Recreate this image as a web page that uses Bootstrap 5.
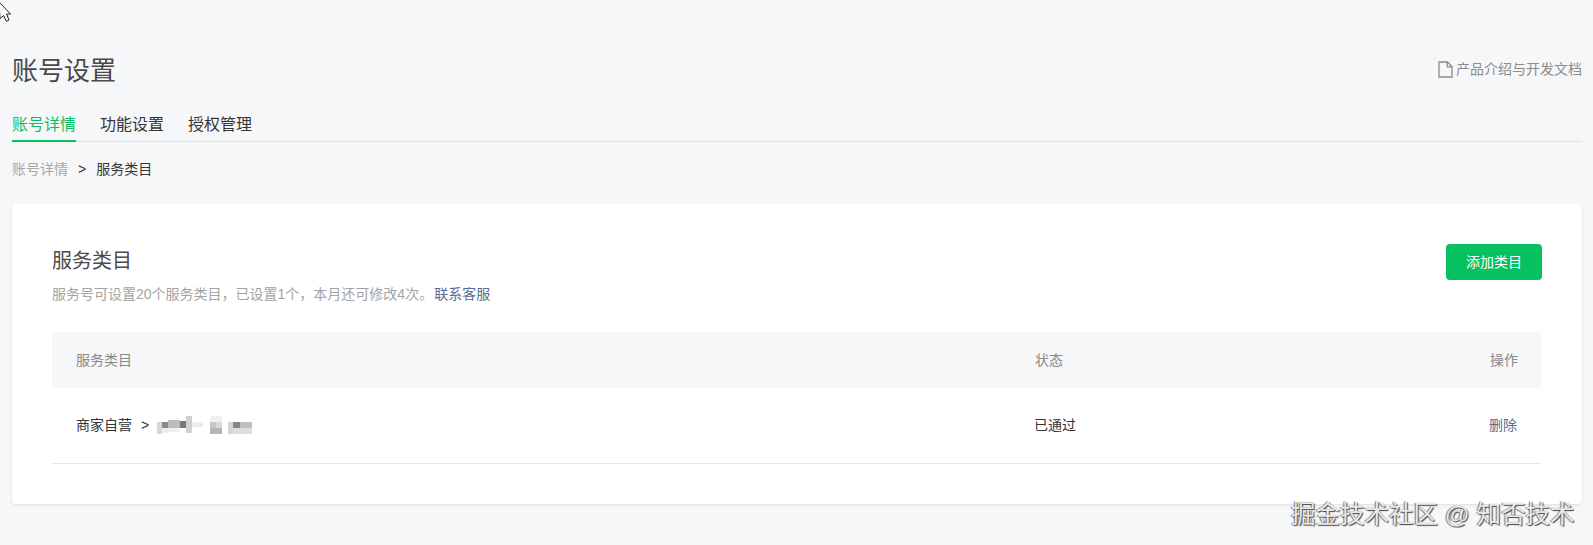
<!DOCTYPE html>
<html lang="zh-CN">
<head>
<meta charset="UTF-8">
<meta name="viewport" content="width=device-width, initial-scale=1">
<title>账号设置</title>
<link href="https://cdn.jsdelivr.net/npm/bootstrap@5.3.3/dist/css/bootstrap.min.css" rel="stylesheet">
<style>
html, body { height: 100%; }
body { background: #f6f7f9; color: #353535; font-family: "Liberation Sans", "Noto Sans CJK SC", sans-serif; overflow: hidden; position: relative; }
.page-wrap { padding: 51px 11px 0 12px; }
.page-title { font-size: 26px; line-height: 40px; font-weight: 400; color: #4a4a4a; margin: 0; }
.doc-link { font-size: 14px; color: #8c8c8c; text-decoration: none; margin-top: -4px; }
.doc-icon { margin-right: 3px; }
.tab-bar { margin-top: 18px; border-bottom: 1px solid #e0e2e5; gap: 24px; height: 33px; }
.tab-item { font-size: 16px; line-height: 24px; height: 33px; padding-top: 4px; color: #353535; text-decoration: none; }
.tab-item.on { color: #07c160; border-bottom: 2px solid #07c160; }
.crumbs { font-size: 14px; line-height: 20px; margin-top: 17px; color: #353535; }
.crumbs .prev { color: #a8a8a8; }
.crumbs .sep { margin: 0 10px; }
.panel { background: #fff; border-radius: 4px; box-shadow: 0 1px 3px rgba(0,0,0,.1); margin-top: 25px; padding: 40px 40px 40px; }
.panel-title { font-size: 20px; line-height: 32px; font-weight: 400; color: #4a4a4a; margin: 1px 0 0; }
.panel-tip { font-size: 14px; line-height: 20px; color: #a3a3a3; margin: 7px 0 0; }
.blue-link { color: #576b95; text-decoration: none; }
.panel-tip .blue-link { margin-left: 1px; }
.btn-add { background: #07c160; color: #fff; width: 96px; height: 36px; font-size: 14px; line-height: 20px; border: 0; border-radius: 4px; padding: 0; }
.table-head { background: #f6f7f9; border-radius: 4px; height: 56px; margin-top: 28px; padding: 0 24px; font-size: 14px; color: #888; }
.table-line { height: 76px; padding: 0 24px; font-size: 14px; border-bottom: 1px solid #e4e6e8; margin-right: 1px; }
.col-name { flex: 1 1 auto; }
.col-state { width: 301px; }
.col-act { width: 182px; text-align: right; }
.path-sep { margin-left: 9px; }
.mosaic { display: block; margin-left: 8px; filter: blur(.5px); }
.cursor-mark { position: absolute; left: 0; top: 0; }
.watermark { position: absolute; left: 1291px; top: 499px; font-size: 24.5px; line-height: 32px; color: #e9e9e9; text-shadow: 1px 1px 1px #444, -1px 0 1px #777; white-space: nowrap; }
</style>
</head>

<body>

<svg class="cursor-mark" width="12" height="24" viewBox="0 0 12 24">
  <path d="M-1 2 L10.5 14 L6.6 14 L9 20 L6.4 21.4 L3.6 15.6 L0 18.5 Z" fill="#fff" stroke="#222" stroke-width="1"/>
</svg>

<div class="page-wrap">
  <div class="d-flex justify-content-between align-items-center">
    <h1 class="page-title">账号设置</h1>
    <a href="#" class="doc-link d-flex align-items-center">
      <svg class="doc-icon" width="15" height="17" viewBox="0 0 15 17" fill="none" stroke="#8c8c8c" stroke-width="1.3">
        <path d="M1 1 H9.4 L14 5.6 V16 H1 Z M9.2 1 V5.8 H14"/>
      </svg>产品介绍与开发文档
    </a>
  </div>

  <div class="tab-bar d-flex">
    <a href="#" class="tab-item on">账号详情</a>
    <a href="#" class="tab-item">功能设置</a>
    <a href="#" class="tab-item">授权管理</a>
  </div>

  <div class="crumbs"><span class="prev">账号详情</span><span class="sep">&gt;</span>服务类目</div>

  <div class="panel">
    <div class="d-flex justify-content-between align-items-start">
      <div>
        <h2 class="panel-title">服务类目</h2>
        <p class="panel-tip">服务号可设置20个服务类目，已设置1个，本月还可修改4次。<a href="#" class="blue-link">联系客服</a></p>
      </div>
      <button type="button" class="btn-add">添加类目</button>
    </div>

    <div class="table-head d-flex align-items-center">
      <div class="col-name">服务类目</div>
      <div class="col-state">状态</div>
      <div class="col-act">操作</div>
    </div>
    <div class="table-line d-flex align-items-center">
      <div class="col-name d-flex align-items-center">
        <span>商家自营</span><span class="path-sep">&gt;</span>
        <svg class="mosaic" width="98" height="20" viewBox="0 0 98 20">
          <rect x="0" y="6" width="5" height="12" fill="#d8d8d8"/>
          <rect x="5" y="6" width="6" height="6" fill="#8a8a8a"/>
          <rect x="11" y="4" width="12" height="8" fill="#bcbcbc"/>
          <rect x="23" y="5" width="6" height="7" fill="#777777"/>
          <rect x="29" y="0" width="6" height="17" fill="#d0d0d0"/>
          <rect x="35" y="6" width="11" height="5" fill="#ececec"/>
          <rect x="5" y="12" width="6" height="5" fill="#ededed"/>
          <rect x="11" y="12" width="12" height="4" fill="#f0f0f0"/>
          <rect x="53" y="0" width="12" height="6" fill="#f0f0f0"/>
          <rect x="53" y="6" width="6" height="6" fill="#c6c6c6"/>
          <rect x="59" y="6" width="6" height="6" fill="#dadada"/>
          <rect x="53" y="12" width="12" height="6" fill="#b4b4b4"/>
          <rect x="71" y="6" width="5" height="12" fill="#d4d4d4"/>
          <rect x="76" y="6" width="7" height="6" fill="#858585"/>
          <rect x="83" y="6" width="12" height="6" fill="#c0c0c0"/>
          <rect x="76" y="12" width="19" height="6" fill="#dedede"/>
        </svg>
      </div>
      <div class="col-state">已通过</div>
      <div class="col-act"><a href="#" class="blue-link">删除</a></div>
    </div>
  </div>
</div>

<div class="watermark">掘金技术社区 @ 知否技术</div>

<script src="https://cdn.jsdelivr.net/npm/bootstrap@5.3.3/dist/js/bootstrap.bundle.min.js"></script>
</body>
</html>
